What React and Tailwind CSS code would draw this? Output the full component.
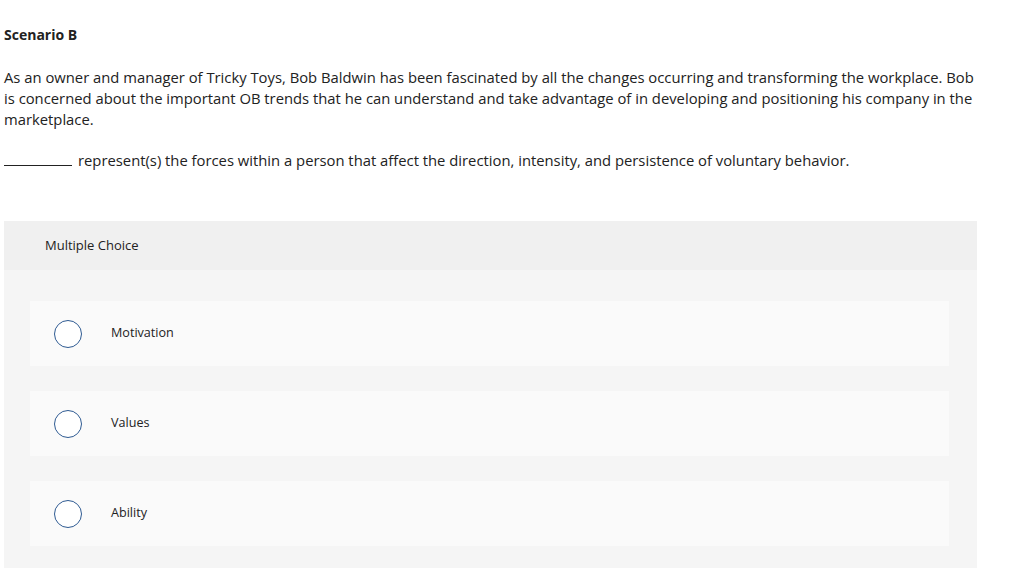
import React from 'react';

const OPTIONS = ['Motivation', 'Values', 'Ability'];

export default function App() {
  return (
    <div className="min-h-screen bg-white text-[#222]" style={{ fontFamily: '"Open Sans", sans-serif' }}>
      <div className="pl-[4px] pr-[40px] pt-[26px]">
        <h2 className="text-[14px] font-bold leading-[18px]">Scenario B</h2>

        <p className="mt-[23px] max-w-[976px] text-[14.8px] leading-[21px]">
          As an owner and manager of Tricky Toys, Bob Baldwin has been fascinated by all the changes occurring and transforming the workplace. Bob is concerned about the important OB trends that he can understand and take advantage of in developing and positioning his company in the marketplace.
        </p>

        <p className="mt-[20px] text-[14.8px] leading-[21px]">
          <span className="inline-block w-[68px] border-b border-[#222] align-baseline mr-[6px]"></span>
          represent(s) the forces within a person that affect the direction, intensity, and persistence of voluntary behavior.
        </p>

        {/* Question panel */}
        <div className="mt-[50px] w-[973px] bg-[#f5f5f5]">
          <div className="h-[49px] bg-[#f0f0f0] flex items-center pl-[41px] text-[13px]">
            Multiple Choice
          </div>
          <div className="pt-[31px] pb-[22px] pl-[26px] pr-[28px] flex flex-col gap-[25px]">
            {OPTIONS.map((opt) => (
              <label key={opt} className="h-[65px] bg-[#fafafa] flex items-center">
                <span className="ml-[24px] w-[28px] h-[28px] rounded-full border border-[#2e5a92] bg-white shrink-0"></span>
                <span className="ml-[29px] text-[12.6px]">{opt}</span>
              </label>
            ))}
          </div>
        </div>
      </div>
    </div>
  );
}
